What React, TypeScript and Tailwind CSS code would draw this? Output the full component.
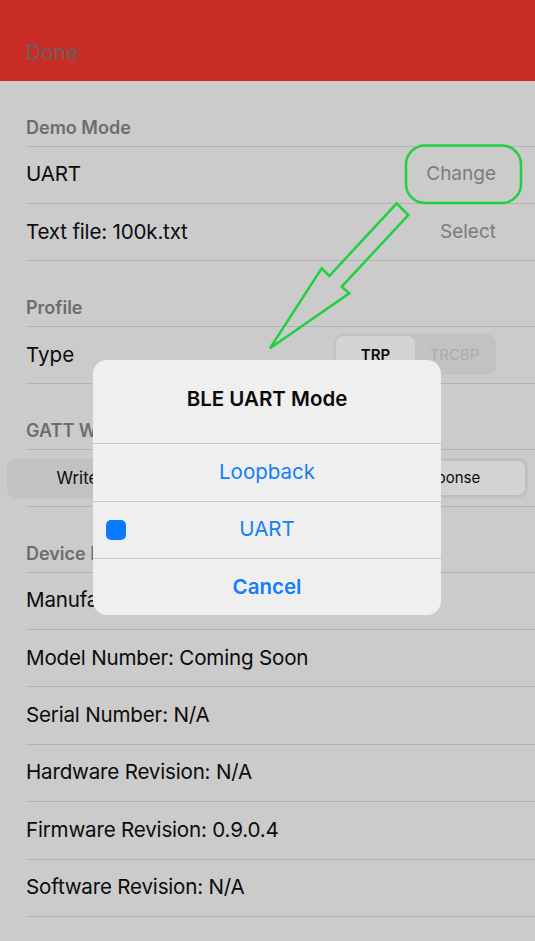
import React from "react";

function Row({ children, right }: { children: React.ReactNode; right?: React.ReactNode }) {
  return (
    <div className="ml-[26px] h-[57.4px] flex items-center justify-between border-b border-[#b4b4b4] pr-[39px]">
      <span className="text-[20.6px] text-[#0b0b0b] tracking-[-0.2px]">{children}</span>
      {right}
    </div>
  );
}

function SectionHeader({ title }: { title: string }) {
  return (
    <div className="ml-[26px] h-[65.5px] flex items-end pb-[5px] border-b border-[#b4b4b4]">
      <span className="text-[18px] font-semibold text-[#6d6d6d]">{title}</span>
    </div>
  );
}

export default function App() {
  return (
    <div
      className="relative w-[535px] h-[941px] bg-[#cbcbcb] overflow-hidden"
      style={{ fontFamily: "Inter, 'Noto Sans', sans-serif" }}
    >
      {/* nav bar */}
      <div className="h-[81px] bg-[#c92d27] flex items-end pb-[13px] px-[26px]">
        <span className="text-[21px] text-[#6b5f5c]">Done</span>
      </div>

      <SectionHeader title="Demo Mode" />
      <Row right={<span className="text-[19px] text-[#7c7c7c]">Change</span>}>UART</Row>
      <Row right={<span className="text-[19px] text-[#7c7c7c]">Select</span>}>Text file: 100k.txt</Row>

      <SectionHeader title="Profile" />
      <div className="ml-[26px] h-[57.4px] flex items-center justify-between border-b border-[#b4b4b4] pr-[39px]">
        <span className="text-[20.6px] text-[#0b0b0b]">Type</span>
        <div className="flex w-[162px] h-[41px] rounded-[9px] bg-[#c2c2c2] p-[2px]">
          <div className="flex-1 rounded-[7px] bg-[#d3d3d3] flex items-center justify-center text-[15px] font-semibold text-[#0b0b0b]">
            TRP
          </div>
          <div className="flex-1 flex items-center justify-center text-[15px] text-[#acacac]">TRCBP</div>
        </div>
      </div>

      <SectionHeader title="GATT Write Type" />
      <div className="relative h-[57.4px] flex items-center px-[7px]">
        <div className="flex w-full h-[40px] rounded-[9px] bg-[#c2c2c2] p-[2px]">
          <div className="flex-1 flex items-center justify-center text-[16.8px] text-[#0b0b0b]">Write with Response</div>
          <div className="flex-1 rounded-[8px] bg-[#d3d3d3] border border-[#bdbdbd] flex items-center justify-center text-[15px] text-[#0b0b0b]">
            Write without Response
          </div>
        </div>
        <div className="absolute left-[26px] right-0 bottom-0 h-px bg-[#b4b4b4]" />
      </div>

      <SectionHeader title="Device Information" />
      <Row>Manufacturer Name</Row>
      <Row>Model Number: Coming Soon</Row>
      <Row>Serial Number: N/A</Row>
      <Row>Hardware Revision: N/A</Row>
      <Row>Firmware Revision: 0.9.0.4</Row>
      <Row>Software Revision: N/A</Row>

      {/* annotation */}
      <svg className="absolute inset-0 pointer-events-none" width="535" height="941" viewBox="0 0 535 941">
        <rect x="406" y="145.5" width="115" height="57.5" rx="19" fill="none" stroke="#1fd13f" strokeWidth="2.5" />
        <polygon
          points="396.7,203.3 408.3,215 341.7,286.7 349.3,293.3 270,348.3 321.7,268.3 329.3,276"
          fill="none"
          stroke="#1fd13f"
          strokeWidth="2.5"
          strokeLinejoin="miter"
        />
      </svg>

      {/* alert */}
      <div className="absolute left-[93px] top-[360px] w-[348px] rounded-[14px] bg-[#efefef] overflow-hidden">
        <div className="h-[83px] flex items-start justify-center pt-[24px]">
          <span className="text-[20.5px] font-semibold text-[#0b0b0b]">BLE UART Mode</span>
        </div>
        <div className="h-[57.5px] border-t border-[#c9c9c9] flex items-center justify-center text-[20.5px] text-[#147efb]">
          Loopback
        </div>
        <div className="relative h-[57.5px] border-t border-[#c9c9c9] flex items-center justify-center text-[20.5px] text-[#147efb]">
          <span className="absolute left-[13px] top-[18px] w-[20px] h-[20px] rounded-[5px] bg-[#0a7aff]" />
          UART
        </div>
        <div className="h-[57px] border-t border-[#c9c9c9] flex items-center justify-center text-[20.5px] font-semibold text-[#147efb]">
          Cancel
        </div>
      </div>
    </div>
  );
}
